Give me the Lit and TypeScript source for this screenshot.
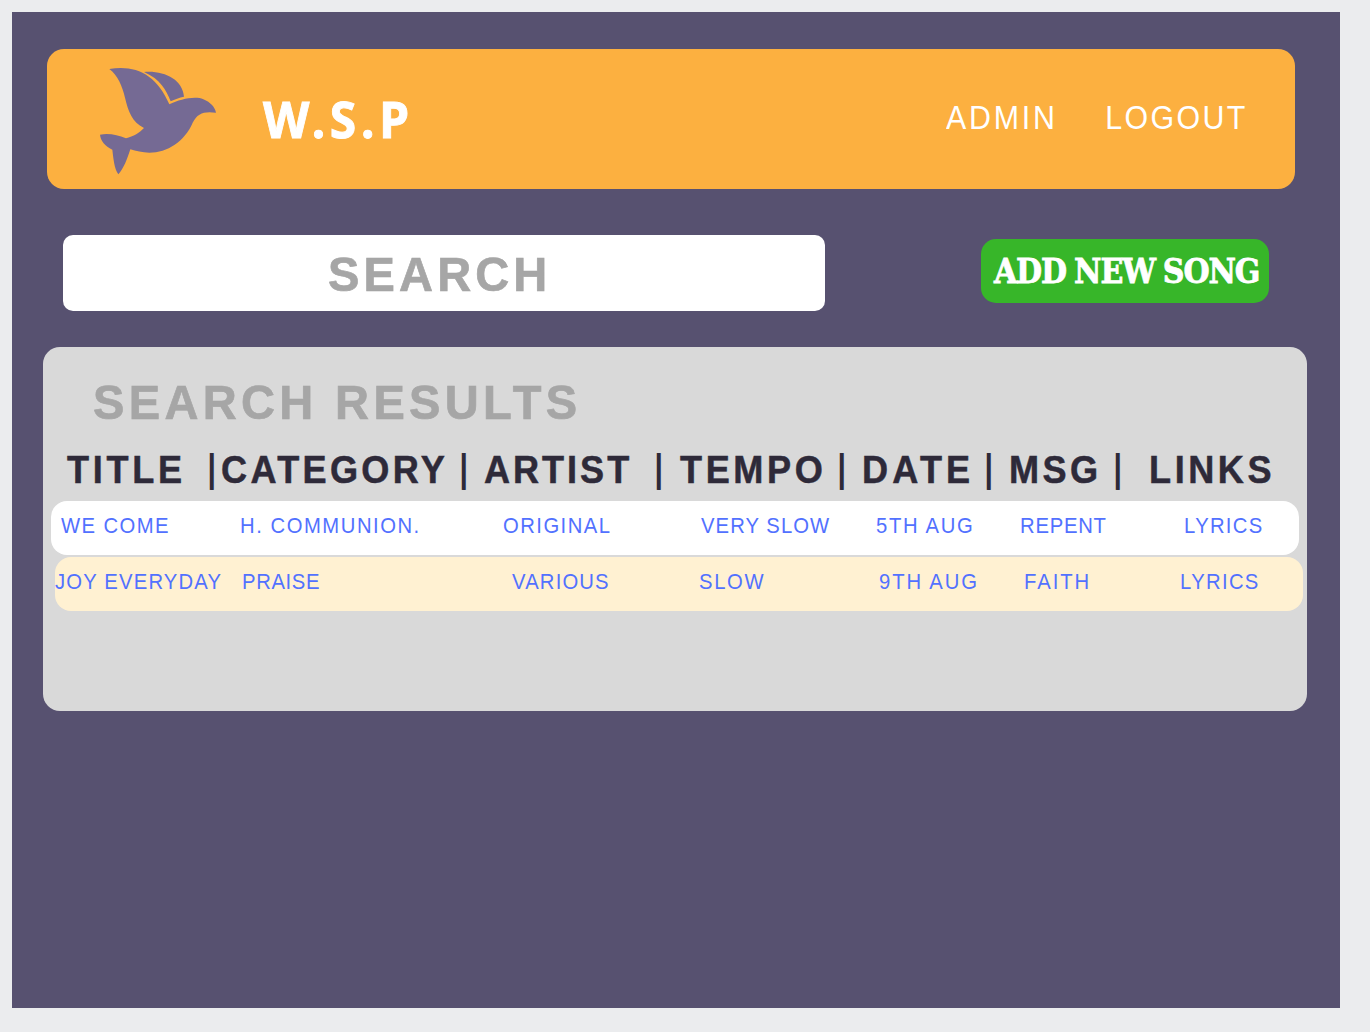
import { LitElement, html, css } from "lit";
import { customElement, property } from "lit/decorators.js";
import { styleMap } from "lit/directives/style-map.js";

type Item = [text: string, left: number, right: number];

/** One line of tracked text whose letters spread over exactly `width` pixels. */
@customElement("tracked-text")
class TrackedText extends LitElement {
  @property() text = "";
  @property({ type: Number }) width = 0;
  @property({ type: Number }) gap = 0;
  @property({ type: Number }) size = 22;
  @property({ type: Number }) weight = 400;
  @property({ type: Number }) stretch = 1;
  @property({ type: Number }) words = 0;
  @property({ type: Number }) stroke = 0;
  @property() family = "Liberation Sans";

  static styles = css`
    :host {
      display: block;
      flex: none;
    }
    .box {
      display: block;
      white-space: pre;
    }
    .line {
      display: inline-block;
      vertical-align: top;
      transform-origin: 0 0;
    }
  `;

  render() {
    const ctx = document.createElement("canvas").getContext("2d")!;
    const font = `"${this.family}", sans-serif`;
    ctx.font = `${this.weight} ${this.size}px ${font}`;
    const m = ctx.measureText(this.text);
    const blanks = this.text.split(" ").length - 1;
    const ink = m.actualBoundingBoxLeft + m.actualBoundingBoxRight + blanks * this.words;
    const n = this.text.length - 1;
    const spacing = n > 0 ? (this.width / this.stretch - ink) / n : 0;
    const box = {
      width: `${this.width}px`,
      marginLeft: `${this.gap}px`,
      font: `${this.weight} ${this.size}px/${this.size}px ${font}`,
    };
    const line = {
      letterSpacing: `${spacing}px`,
      wordSpacing: `${this.words}px`,
      webkitTextStroke: `${this.stroke}px currentColor`,
      transform: `scaleX(${this.stretch}) translateX(${m.actualBoundingBoxLeft}px)`,
    };
    return html`<span class="box" style=${styleMap(box)}
      ><span class="line" style=${styleMap(line)}>${this.text}</span></span
    >`;
  }
}

const HEADINGS: Item[] = [
  ["TITLE", 67, 180.7],
  ["|", 209.3, 213.1],
  ["CATEGORY", 222.5, 445],
  ["|", 461.3, 465.1],
  ["ARTIST", 484, 629],
  ["|", 656.3, 660.1],
  ["TEMPO", 680, 821.3],
  ["|", 839.3, 843.1],
  ["DATE", 864, 968.9],
  ["|", 986.3, 990.1],
  ["MSG", 1011.5, 1097],
  ["|", 1114.8, 1118.6],
  ["LINKS", 1150.8, 1270],
];

const FIRST: Item[] = [
  ["WE COME", 60.7, 167.5],
  ["H. COMMUNION.", 241, 418.2],
  ["ORIGINAL", 504.3, 610],
  ["VERY SLOW", 701.3, 830],
  ["5TH AUG", 876, 972.8],
  ["REPENT", 1021, 1105.5],
  ["LYRICS", 1185, 1261.6],
];

const SECOND: Item[] = [
  ["JOY EVERYDAY", 54.8, 221.5],
  ["PRAISE", 243, 318.8],
  ["VARIOUS", 512, 608],
  ["SLOW", 699.9, 763.6],
  ["9TH AUG", 880, 977],
  ["FAITH", 1025, 1088.4],
  ["LYRICS", 1181.3, 1258],
];

@customElement("app-root")
class AppRoot extends LitElement {
  static styles = css`
    :host {
      display: block;
      background: #ebecee;
      height: 1032px;
      overflow: hidden;
    }
    * {
      box-sizing: border-box;
    }
    .frame {
      display: flow-root;
      margin: 12px 30px 0 12px;
      height: 996px;
      background: #575170;
    }
    .nav {
      display: flex;
      align-items: flex-start;
      width: 1248px;
      height: 140px;
      margin: 37px 0 0 35px;
      border-radius: 17px;
      background: #fcb040;
      color: #fff;
    }
    .bird {
      flex: none;
      width: 120px;
      height: 110px;
      margin: 17px 0 0 51px;
      fill: #756a94;
    }
    .brand {
      margin: 45px 0 0 45px;
    }
    .links {
      display: flex;
      margin: 52px 50px 0 auto;
    }
    .tools {
      display: flex;
      align-items: flex-start;
      margin: 46px 0 0 51px;
    }
    .search {
      width: 762px;
      height: 76px;
      padding: 15px 0 0 266px;
      border-radius: 10px;
      background: #fff;
      color: #a6a6a6;
    }
    .add {
      width: 288px;
      height: 64px;
      margin: 4px 0 0 156px;
      padding: 16px 0 0 12px;
      border-radius: 15px;
      background: #37b629;
      color: #fff;
    }
    .panel {
      display: flow-root;
      width: 1264px;
      height: 364px;
      margin: 36px 0 0 31px;
      border-radius: 17px;
      background: #d9d9d9;
    }
    .title {
      margin: 31px 0 0 50.5px;
      color: #a6a6a6;
    }
    .headings {
      display: flex;
      height: 38px;
      margin-top: 24px;
      color: #2e2a39;
    }
    .bar {
      margin-top: -2px;
    }
    .row {
      display: flex;
      width: 1248px;
      height: 54px;
      margin: 12px 0 0 8px;
      padding-top: 14px;
      border-radius: 16px;
      background: #fff;
      color: #5271ff;
    }
    .row.alt {
      margin: 2px 0 0 12px;
      background: #fff1d2;
    }
  `;

  private line(items: Item[], start: number, size: number, weight: number, stretch: number, stroke = 0) {
    return items.map(([text, left, right], i) => {
      const gap = left - (i ? items[i - 1][2] : start);
      const bar = text === "|";
      return html`<tracked-text
        class=${bar ? "bar" : "word"}
        .text=${text}
        .width=${right - left}
        .gap=${gap}
        .size=${size}
        .weight=${weight}
        .stretch=${bar ? 0.8 : stretch}
        .stroke=${bar ? 0 : stroke}
      ></tracked-text>`;
    });
  }

  render() {
    return html`
      <div class="frame">
        <header class="nav">
          <svg class="bird" viewBox="54 48 360 330">
            <path
              d="M88 57 C168 44 230 74 268 163 C300 148 345 137 370 148 C392 157 405 172 408 188 C372 183 352 190 338 218 C314 274 262 308 208 308 C187 308 168 303 151 298 C142 325 131 357 115 373 C103 356 100 325 97 299 C75 288 62 273 60 254 C90 249 112 256 138 265 C160 260 180 247 192 234 C156 215 145 185 135 143 C127 108 113 76 88 57Z"
            />
            <path d="M192 66 C252 61 308 88 312 140 C298 143 284 148 272 154 C258 120 242 88 192 66Z" />
          </svg>
          <div class="brand">
            <tracked-text text="W.S.P" width="144" size="50" weight="700" stretch="0.96" stroke="0.9" family="Noto Sans"></tracked-text>
          </div>
          <nav class="links">
            ${this.line([["ADMIN", 945, 1052.3], ["LOGOUT", 1106.3, 1244.5]], 945, 33, 400, 0.92)}
          </nav>
        </header>
        <div class="tools">
          <div class="search">
            <tracked-text text="SEARCH" width="216" size="49" weight="700" stretch="0.96" stroke="0.7"></tracked-text>
          </div>
          <div class="add">
            <tracked-text text="ADD NEW SONG" width="265.5" size="33" weight="700" stretch="0.91" words="-1.5" stroke="0.8" family="DejaVu Serif"></tracked-text>
          </div>
        </div>
        <main class="panel">
          <div class="title">
            <tracked-text text="SEARCH RESULTS" width="481.5" size="49" weight="700" stretch="0.96" stroke="0.7"></tracked-text>
          </div>
          <div class="headings">${this.line(HEADINGS, 43, 38, 700, 0.95, 0.5)}</div>
          <div class="row">${this.line(FIRST, 51, 22, 400, 0.92)}</div>
          <div class="row alt">${this.line(SECOND, 55, 22, 400, 0.92)}</div>
        </main>
      </div>
    `;
  }
}
